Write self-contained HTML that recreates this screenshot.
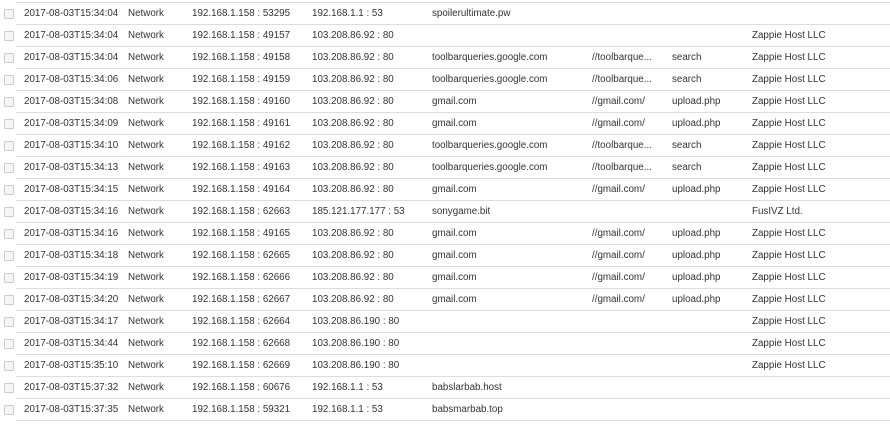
<!DOCTYPE html>
<html><head><style>
body{margin:0;background:#fff;width:890px;height:425px;overflow:hidden;font-family:"Liberation Sans",sans-serif;font-size:9.8px;color:#333}
.r{position:absolute;left:0;width:890px;height:22px}
.r:after{content:"";position:absolute;left:16px;right:0;bottom:0;border-bottom:1px solid #ddd}
.r span{position:absolute;top:5px;white-space:nowrap}
.cb{position:absolute;left:4px;top:6px;width:8px;height:8px;border:1px solid #ccc;background:#f6f6f6;border-radius:1px}
</style></head><body>
<div id="t"></div>
<script>
var d=[
["2017-08-03T15:34:04","192.168.1.158 : 53295","192.168.1.1 : 53","spoilerultimate.pw","","",""],
["2017-08-03T15:34:04","192.168.1.158 : 49157","103.208.86.92 : 80","","","","Zappie Host LLC"],
["2017-08-03T15:34:04","192.168.1.158 : 49158","103.208.86.92 : 80","toolbarqueries.google.com","//toolbarque...","search","Zappie Host LLC"],
["2017-08-03T15:34:06","192.168.1.158 : 49159","103.208.86.92 : 80","toolbarqueries.google.com","//toolbarque...","search","Zappie Host LLC"],
["2017-08-03T15:34:08","192.168.1.158 : 49160","103.208.86.92 : 80","gmail.com","//gmail.com/","upload.php","Zappie Host LLC"],
["2017-08-03T15:34:09","192.168.1.158 : 49161","103.208.86.92 : 80","gmail.com","//gmail.com/","upload.php","Zappie Host LLC"],
["2017-08-03T15:34:10","192.168.1.158 : 49162","103.208.86.92 : 80","toolbarqueries.google.com","//toolbarque...","search","Zappie Host LLC"],
["2017-08-03T15:34:13","192.168.1.158 : 49163","103.208.86.92 : 80","toolbarqueries.google.com","//toolbarque...","search","Zappie Host LLC"],
["2017-08-03T15:34:15","192.168.1.158 : 49164","103.208.86.92 : 80","gmail.com","//gmail.com/","upload.php","Zappie Host LLC"],
["2017-08-03T15:34:16","192.168.1.158 : 62663","185.121.177.177 : 53","sonygame.bit","","","FusIVZ Ltd."],
["2017-08-03T15:34:16","192.168.1.158 : 49165","103.208.86.92 : 80","gmail.com","//gmail.com/","upload.php","Zappie Host LLC"],
["2017-08-03T15:34:18","192.168.1.158 : 62665","103.208.86.92 : 80","gmail.com","//gmail.com/","upload.php","Zappie Host LLC"],
["2017-08-03T15:34:19","192.168.1.158 : 62666","103.208.86.92 : 80","gmail.com","//gmail.com/","upload.php","Zappie Host LLC"],
["2017-08-03T15:34:20","192.168.1.158 : 62667","103.208.86.92 : 80","gmail.com","//gmail.com/","upload.php","Zappie Host LLC"],
["2017-08-03T15:34:17","192.168.1.158 : 62664","103.208.86.190 : 80","","","","Zappie Host LLC"],
["2017-08-03T15:34:44","192.168.1.158 : 62668","103.208.86.190 : 80","","","","Zappie Host LLC"],
["2017-08-03T15:35:10","192.168.1.158 : 62669","103.208.86.190 : 80","","","","Zappie Host LLC"],
["2017-08-03T15:37:32","192.168.1.158 : 60676","192.168.1.1 : 53","babslarbab.host","","",""],
["2017-08-03T15:37:35","192.168.1.158 : 59321","192.168.1.1 : 53","babsmarbab.top","","",""]];
var x=[24,192,312,432,592,672,752],h="";
d.forEach(function(r,i){
 h+='<div class="r" style="top:'+(3+i*22)+'px"><div class="cb"></div><span style="left:128px">Network</span>';
 r.forEach(function(c,j){if(c)h+='<span style="left:'+x[j]+'px">'+c+'</span>';});
 h+='</div>';});
document.getElementById('t').innerHTML=h;
</script>
<div style="position:absolute;left:16px;right:0;top:2px;border-top:1px solid #ddd"></div>
</body></html>
